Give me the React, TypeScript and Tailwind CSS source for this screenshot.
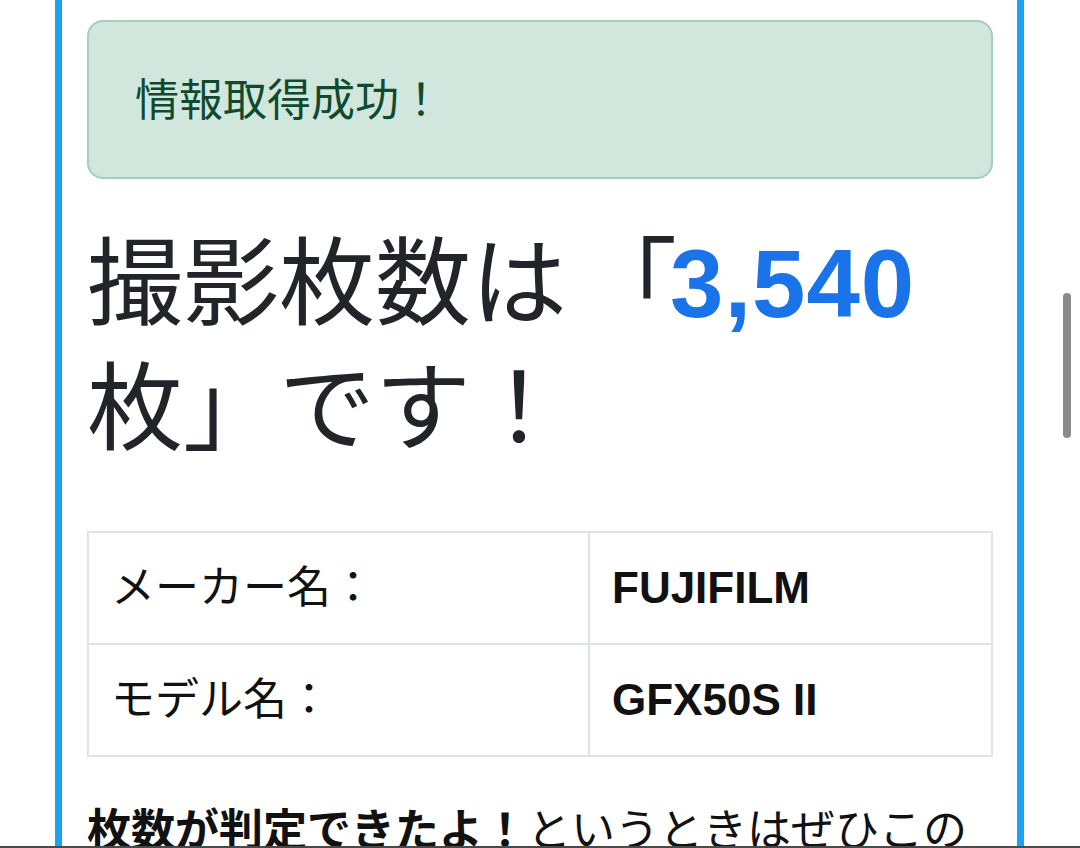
import React from "react";

const rows = [
  { label: "メーカー名：", value: "FUJIFILM" },
  { label: "モデル名：", value: "GFX50S II" },
];

export default function App() {
  return (
    <div className="relative h-[848px] overflow-hidden bg-white text-[#212529] font-['Liberation_Sans','Noto_Sans_CJK_JP',sans-serif]">
      <div className="ml-[55px] w-[969px] border-x-[7px] border-[#1da1f2] pl-[25px] pr-[24px] pt-[20px] pb-10">
        {/* success alert */}
        <div className="rounded-[16px] border-2 border-[#a3cfbb] bg-[#d1e7dd] px-[46px] pt-[46px] pb-[43px] text-[44px] leading-[66px] text-[#0f4a2e]">
          情報取得成功！
        </div>

        <h1 className="mt-[42px] text-[96px] leading-[125px] font-normal">
          撮影枚数は<span className="relative left-[14px]">「</span>
          <span className="ml-[7px] font-bold tracking-[1px] text-[#1a73e8]">3,540</span>
          枚」です！
        </h1>

        <table className="mt-[60px] w-full border-collapse text-[44px] leading-[66px] text-[#111]">
          <tbody>
            {rows.map((row) => (
              <tr key={row.label}>
                <td className="w-[501px] border-2 border-[#dee2e6] px-[22px] py-[22px]">
                  {row.label}
                </td>
                <td className="border-2 border-[#dee2e6] px-[22px] py-[22px] font-bold">
                  {row.value}
                </td>
              </tr>
            ))}
          </tbody>
        </table>

        <p className="mt-[41px] text-[44px] leading-[66px] text-[#111]">
          <strong className="font-bold">枚数が判定できたよ！</strong>
          というときはぜひこのページをシェアしてくださいね。
        </p>
      </div>

      {/* overlay scroll indicator */}
      <div className="absolute left-[1063px] top-[293px] h-[145px] w-[8px] rounded-full bg-[#8a8a8a]" />
      {/* toolbar edge */}
      <div className="absolute bottom-0 left-0 h-[2px] w-full bg-[#4a4a4a]" />
    </div>
  );
}
